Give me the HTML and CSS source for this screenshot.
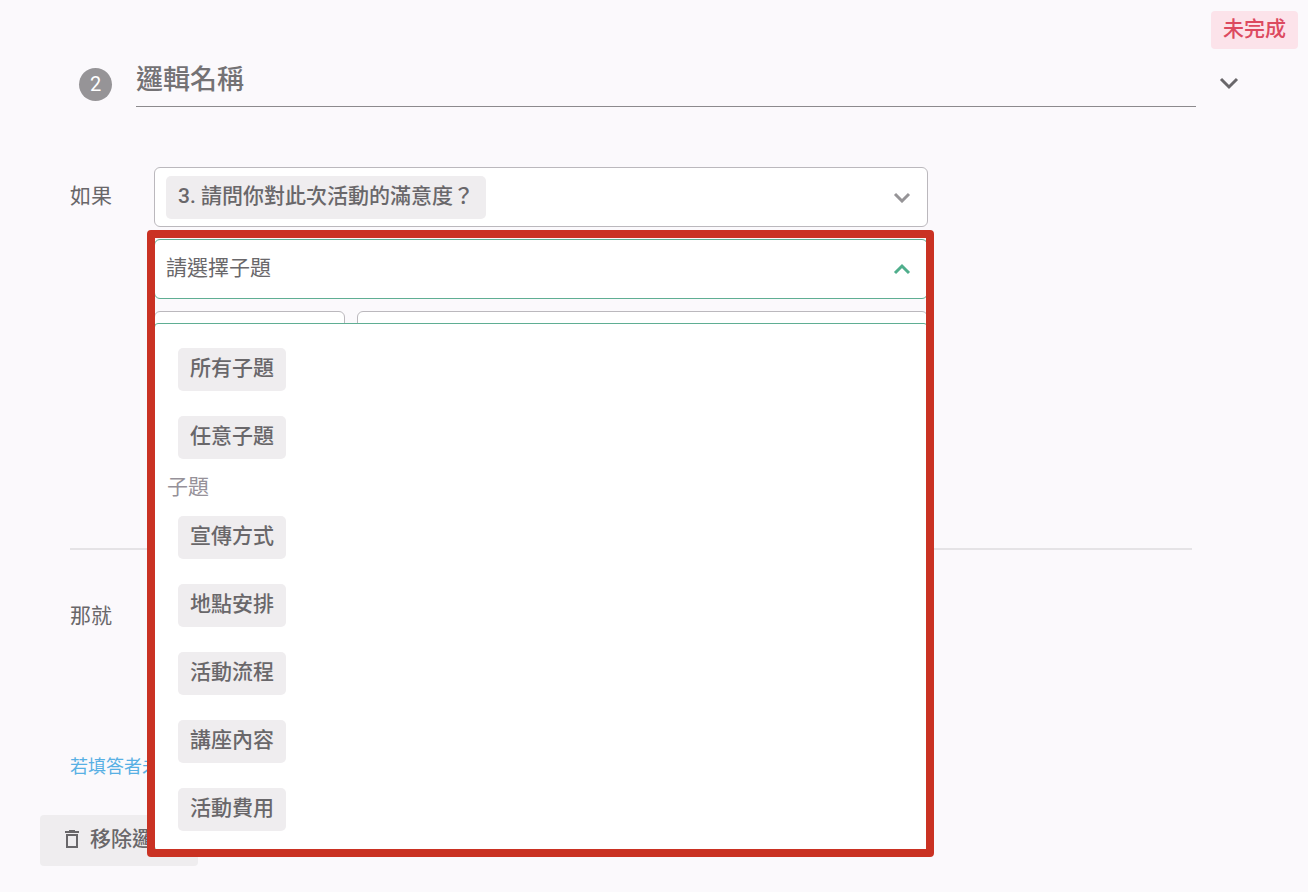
FILE: index.html
```html
<!DOCTYPE html>
<html lang="zh-Hant">
<head>
<meta charset="utf-8">
<meta name="viewport" content="width=device-width, initial-scale=1">
<title>邏輯名稱</title>
<link rel="stylesheet" href="styles.css">
</head>
<body>
<main class="logic">
  <div class="status-bar"><span class="status">未完成</span></div>

  <header class="heading">
    <span class="step">2</span>
    <input class="name" type="text" placeholder="邏輯名稱" aria-label="邏輯名稱">
    <button class="collapse" type="button" aria-label="收合">
      <svg width="20" height="14" viewBox="0 0 20 14"><path d="M2 2l8 8 8-8"/></svg>
    </button>
  </header>

  <section class="condition">
    <span class="row-label" id="if-label">如果</span>
    <div class="fields">
      <button class="field" type="button" aria-haspopup="listbox" aria-describedby="if-label">
        <span class="chip">3. 請問你對此次活動的滿意度？</span>
        <svg class="arrow" width="18" height="12" viewBox="0 0 18 12"><path d="M2 3l7 7 7-7"/></svg>
      </button>
      <button class="field field-open" type="button" aria-haspopup="listbox" aria-expanded="true">
        <span class="hint">請選擇子題</span>
        <svg class="arrow" width="18" height="12" viewBox="0 0 18 12"><path d="M2 10l7-7 7 7"/></svg>
      </button>
      <div class="pair">
        <button class="field" type="button" aria-label="條件"></button>
        <button class="field" type="button" aria-label="選項"></button>
      </div>
      <div class="menu" role="listbox">
        <div class="option" role="option"><span class="chip">所有子題</span></div>
        <div class="option" role="option"><span class="chip">任意子題</span></div>
        <div class="group-label">子題</div>
        <div class="option" role="option"><span class="chip">宣傳方式</span></div>
        <div class="option" role="option"><span class="chip">地點安排</span></div>
        <div class="option" role="option"><span class="chip">活動流程</span></div>
        <div class="option" role="option"><span class="chip">講座內容</span></div>
        <div class="option" role="option"><span class="chip">活動費用</span></div>
      </div>
      <div class="marker"></div>
    </div>
  </section>

  <section class="result">
    <span class="row-label">那就</span>
  </section>

  <a class="note" href="#">若填答者未</a>

  <button class="remove" type="button">
    <svg width="16" height="20" viewBox="0 0 16 20"><path d="M1 3h14M5 2h6M3 6h10v12H3z"/></svg>
    移除邏輯
  </button>
</main>
</body>
</html>
```
FILE: styles.css
```css
* {
  box-sizing: border-box;
}

body {
  margin: 0;
  background: #fbf9fc;
  color: #69676a;
  font-family: Roboto, "Noto Sans CJK TC", sans-serif;
  font-size: 21px;
  line-height: 30px;
}

button,
input {
  font: inherit;
  color: inherit;
}

svg {
  display: block;
  flex: none;
  fill: none;
  stroke: currentColor;
}

.logic {
  display: flex;
  flex-direction: column;
  align-items: flex-start;
  padding: 11px 10px 24px 40px;
}

.status-bar {
  display: flex;
  justify-content: flex-end;
  width: 100%;
}

.status {
  padding: 3px 12px 5px;
  border-radius: 4px;
  background: #fce3ea;
  color: #dc4a60;
  font-weight: 500;
}

.heading {
  display: flex;
  align-items: center;
  width: 100%;
  padding: 0 59px 0 39px;
}

.step {
  width: 33px;
  height: 33px;
  margin: 12px 24px 0 0;
  border-radius: 50%;
  background: #969497;
  color: #fff;
  font-size: 20px;
  line-height: 33px;
  text-align: center;
}

.name {
  flex: 1;
  min-width: 0;
  height: 58px;
  padding: 4px 0 0;
  border: 0;
  border-bottom: 1px solid #8c8a8d;
  border-radius: 0;
  background: transparent;
  outline: 0;
  font-size: 27px;
  font-weight: 500;
}

.name::placeholder {
  color: #747275;
  opacity: 1;
}

.collapse {
  margin: 12px 0 0 23px;
  padding: 0;
  border: 0;
  background: none;
  stroke-width: 3;
}

.condition {
  display: flex;
  width: calc(100% - 136px);
  margin: 60px 0 0 30px;
  padding-bottom: 177px;
  border-bottom: 2px solid #e5e3e6;
}

.row-label {
  flex: none;
  width: 84px;
  padding-top: 14px;
}

.fields {
  position: relative;
  display: flex;
  flex: 0 1 774px;
  flex-direction: column;
  gap: 12px;
  min-width: 0;
}

.field {
  display: flex;
  align-items: center;
  justify-content: space-between;
  width: 100%;
  height: 60px;
  padding: 0 16px 0 11px;
  border: 1px solid #bbb8bd;
  border-radius: 6px;
  background: #fff;
  text-align: left;
}

.arrow {
  color: #969497;
  stroke-width: 3;
}

.field-open {
  border-color: #5fae93;
}

.field-open .arrow {
  color: #4fae8c;
}

.hint {
  padding-bottom: 2px;
}

.pair {
  display: grid;
  grid-template-columns: 1fr 3fr;
  gap: 12px;
}

.chip {
  padding: 5px 12px 8px;
  border-radius: 5px;
  background: #efedef;
  font-weight: 500;
}

.menu {
  position: absolute;
  top: 156px;
  right: 0;
  left: 0;
  z-index: 1;
  padding: 12px 12px 6px;
  border: 1px solid #5fae93;
  border-radius: 4px;
  background: #fff;
}

.option {
  display: flex;
  padding: 12px 11px 13px;
}

.group-label {
  padding-bottom: 2px;
  color: #969199;
}

.marker {
  position: absolute;
  top: 63px;
  right: -6px;
  left: -7px;
  z-index: 2;
  height: 627px;
  border: 8px solid #ca3223;
  border-radius: 4px;
  pointer-events: none;
}

.result {
  margin: 51px 0 0 30px;
}

.note {
  margin: 121px 0 0 30px;
  color: #58b0e4;
  font-size: 18px;
  text-decoration: none;
}

.remove {
  display: flex;
  align-items: center;
  gap: 10px;
  margin-top: 33px;
  padding: 9px 24px 12px;
  border: 0;
  border-radius: 4px;
  background: #efedef;
  font-weight: 500;
  stroke-width: 2;
}
```
